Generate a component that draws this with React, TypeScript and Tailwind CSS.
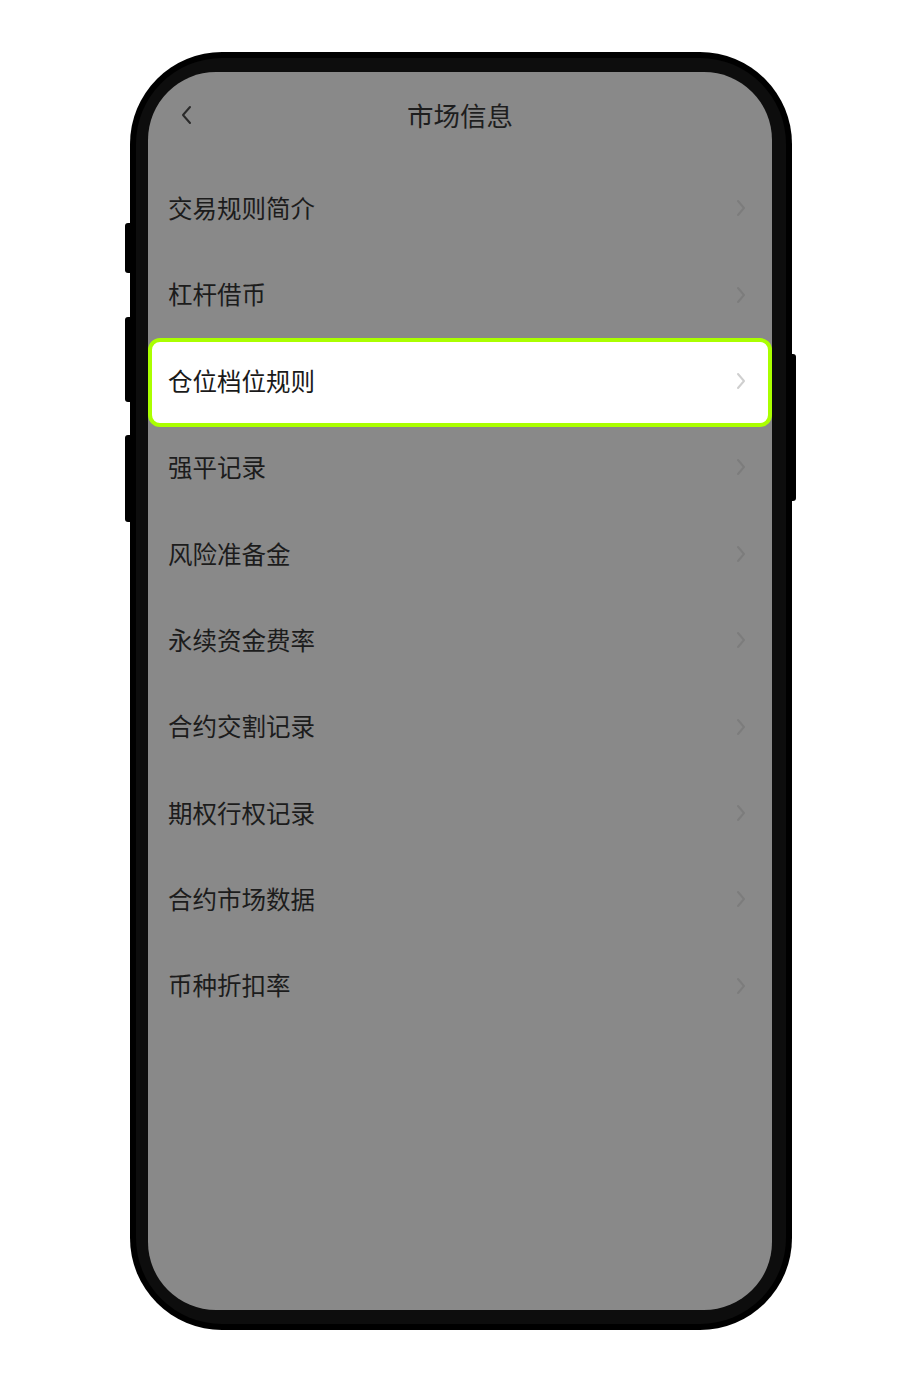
const items = [
  "交易规则简介",
  "杠杆借币",
  "仓位档位规则",
  "强平记录",
  "风险准备金",
  "永续资金费率",
  "合约交割记录",
  "期权行权记录",
  "合约市场数据",
  "币种折扣率",
];

const ACTIVE = 2;

function Chevron({ className }: { className: string }) {
  return (
    <svg width="10" height="18" viewBox="0 0 10 18" fill="none" className={className}>
      <path d="M2 2l6 7-6 7" stroke="currentColor" strokeWidth="2" strokeLinecap="round" strokeLinejoin="round" />
    </svg>
  );
}

export default function App() {
  return (
    <div
      className="min-h-[1382px] bg-white flex justify-center pt-[52px]"
      style={{ fontFamily: '"Noto Sans CJK SC", "Noto Sans", sans-serif' }}
    >
      <div className="relative">
        {/* side buttons */}
        <div className="absolute left-[-5px] top-[171px] w-[6px] h-[50px] rounded-l-[3px] bg-black" />
        <div className="absolute left-[-5px] top-[265px] w-[6px] h-[85px] rounded-l-[3px] bg-black" />
        <div className="absolute left-[-5px] top-[383px] w-[6px] h-[87px] rounded-l-[3px] bg-black" />
        <div className="absolute right-[-4px] top-[302px] w-[6px] h-[147px] rounded-r-[3px] bg-black" />

        <div className="w-[662px] h-[1278px] bg-black p-[6px] rounded-[92px]">
          <div className="h-full bg-[#0d0d0d] pl-[12px] pr-[14px] py-[14px] rounded-[86px]">
            <div className="h-full bg-[#898989] rounded-[68px] overflow-hidden">
              <div className="relative h-[86px] mb-[7px] flex items-center justify-center">
                <svg
                  width="12"
                  height="20"
                  viewBox="0 0 12 20"
                  fill="none"
                  className="absolute left-[33px] top-[33px] text-[#2a2a2a]"
                >
                  <path d="M9 2L2 10l7 8" stroke="currentColor" strokeWidth="2" strokeLinecap="round" strokeLinejoin="round" />
                </svg>
                <span className="text-[26.5px] leading-none text-[#1e1e1e]">市场信息</span>
              </div>

              <div className="flex flex-col">
                {items.map((label, i) =>
                  i === ACTIVE ? (
                    <div
                      key={label}
                      className="h-[89.4px] -mb-[3px] bg-white border-[4px] border-[#aaff00] rounded-[12px] flex items-center justify-between pl-[16px] pr-[22px] pb-[2px]"
                    >
                      <span className="text-[24.5px] leading-none text-[#1a1a1a]">{label}</span>
                      <Chevron className="text-[#cfcfcf]" />
                    </div>
                  ) : (
                    <div
                      key={label}
                      className="h-[86.4px] flex items-center justify-between pl-[20px] pr-[26px]"
                    >
                      <span className="text-[24.5px] leading-none text-[#1c1c1c]">{label}</span>
                      <Chevron className="text-[#7c7c7c]" />
                    </div>
                  )
                )}
              </div>
            </div>
          </div>
        </div>
      </div>
    </div>
  );
}
